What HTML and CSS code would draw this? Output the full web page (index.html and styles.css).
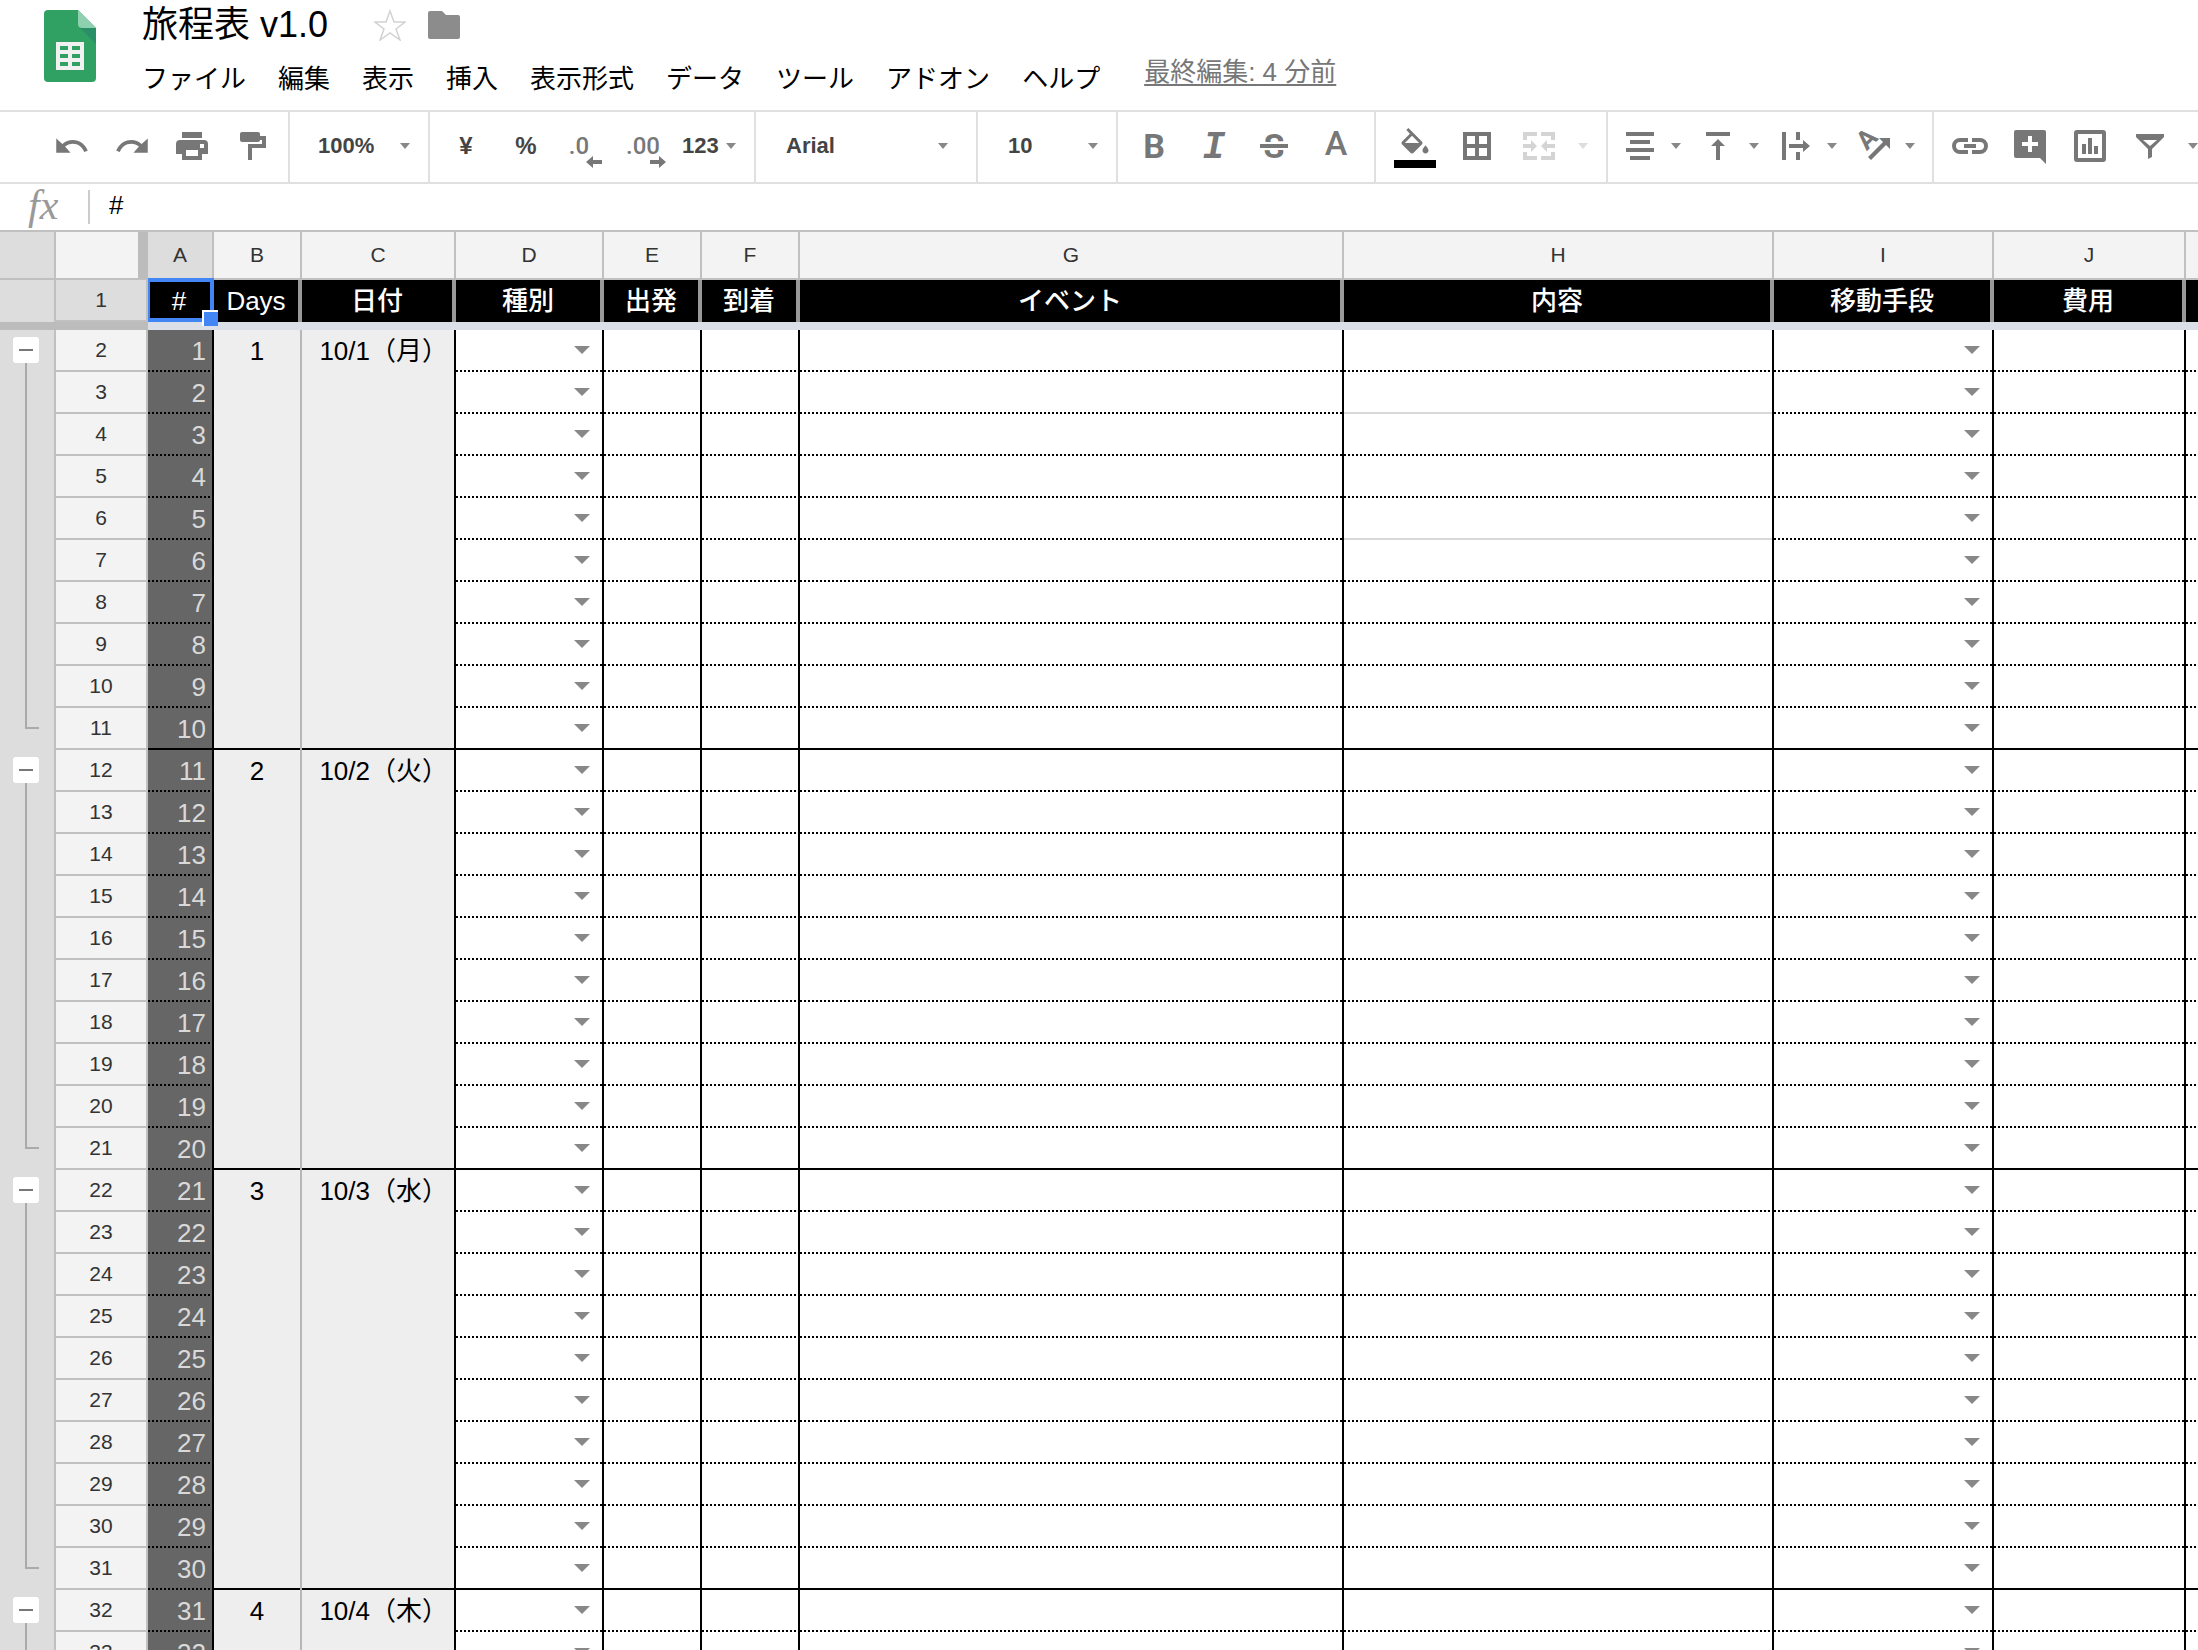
FILE: index.html
```html
<!DOCTYPE html>
<html lang="ja">
<head>
<meta charset="utf-8">
<title>旅程表 v1.0</title>
<link rel="stylesheet" href="styles.css">
</head>
<body>
<div class="app">
  <header class="header">
    <svg class="logo" viewBox="0 0 52 72" aria-hidden="true">
      <path d="M4 0h30l18 18v50a4 4 0 0 1-4 4H4a4 4 0 0 1-4-4V4a4 4 0 0 1 4-4z" fill="#31a163"/>
      <path d="M35 17l17 17V18z" fill="#2a8f67"/>
      <path d="M34 0l18 18H38a4 4 0 0 1-4-4z" fill="#8fd0b1"/>
      <path d="M12 32h28v28H12z" fill="#f1f1f1"/>
      <path d="M16 36h8v4h-8zM28 36h8v4h-8zM16 44h8v4h-8zM28 44h8v4h-8zM16 52h8v4h-8zM28 52h8v4h-8z" fill="#31a163"/>
    </svg>
    <div class="header-main">
      <div class="title-row">
        <h1 class="title">旅程表 v1.0</h1>
        <button class="plain star" aria-label="スター">
          <svg viewBox="0 0 32 32"><path d="M16 2l4 11h11l-9 7 4 11-10-7-10 7 4-11-9-7h11z" fill="none" stroke="#d2d2d2" stroke-width="1.5"/></svg>
        </button>
        <button class="plain folder" aria-label="フォルダ">
          <svg viewBox="0 0 32 28"><path d="M2 0h12l4 4h12a2 2 0 0 1 2 2v20a2 2 0 0 1-2 2H2a2 2 0 0 1-2-2V2a2 2 0 0 1 2-2z" fill="#8c8c8c"/></svg>
        </button>
      </div>
      <nav class="menu">
        <button class="plain">ファイル</button>
        <button class="plain">編集</button>
        <button class="plain">表示</button>
        <button class="plain">挿入</button>
        <button class="plain">表示形式</button>
        <button class="plain">データ</button>
        <button class="plain">ツール</button>
        <button class="plain">アドオン</button>
        <button class="plain">ヘルプ</button>
        <a class="last-edit" href="#history">最終編集: 4 分前</a>
      </nav>
    </div>
  </header>

  <div class="toolbar" role="toolbar">
    <div class="group group-file">
      <button class="tool" aria-label="元に戻す"><svg viewBox="0 0 24 24"><path d="M12.500 8c-2.650 0-5.050.990-6.900 2.600L1.500 7v9.500h9.500l-3.620-4.120c1.390-1.160 3.160-1.880 5.120-1.880 3.540 0 6.550 2.310 7.600 5.500l2.370-.780C21.080 11.030 17.150 8 12.500 8z"/></svg></button>
      <button class="tool" aria-label="やり直す"><svg viewBox="0 0 24 24"><path d="M11.500 8c2.650 0 5.050.990 6.900 2.600L22.500 7v9.500H13l3.620-4.120C15.230 11.220 13.460 10.500 11.500 10.500c-3.540 0-6.550 2.310-7.600 5.500l-2.370-.780C2.920 11.030 6.850 8 11.500 8z"/></svg></button>
      <button class="tool" aria-label="印刷"><svg viewBox="0 0 36 36"><path d="M8 4h20v6H8z"/><path fill-rule="evenodd" d="M6 12h24a4 4 0 0 1 4 4v10h-6v6H8v-6H2V16a4 4 0 0 1 4-4zm6 10v6h12v-6zm14-6v4h4v-4z"/></svg></button>
      <button class="tool" aria-label="書式を貼り付け"><svg viewBox="0 0 36 36"><rect x="6" y="4" width="20" height="10" rx="2"/><path d="M26 8h6v12H18v12h-4V16h14v-4h-2z"/></svg></button>
    </div>
    <div class="group group-select group-zoom">
      <button class="drop">100%<i class="caret"></i></button>
    </div>
    <div class="group group-number">
      <button class="tool symbol">¥</button>
      <button class="tool symbol">%</button>
      <button class="tool decimal" aria-label="小数点以下の桁数を減らす">.0<svg class="less" viewBox="0 0 16 12"><path d="M0 6l7-6v4h9v4H7v4z"/></svg></button>
      <button class="tool decimal decimal-more" aria-label="小数点以下の桁数を増やす">.00<svg class="more" viewBox="0 0 16 12"><path d="M16 6L9 0v4H0v4h9v4z"/></svg></button>
      <button class="drop drop-format">123<i class="caret"></i></button>
    </div>
    <div class="group group-select group-font">
      <button class="drop">Arial<i class="caret"></i></button>
    </div>
    <div class="group group-select group-size">
      <button class="drop">10<i class="caret"></i></button>
    </div>
    <div class="group group-text">
      <button class="tool glyph bold">B</button>
      <button class="tool glyph italic">I</button>
      <button class="tool" aria-label="取り消し線"><svg viewBox="0 0 36 36"><text x="18" y="30" class="strike-letter">S</text><path d="M4 14h28v8H4z" fill="#fff"/><path d="M4 16h28v4H4z"/></svg></button>
      <button class="tool glyph color">A</button>
    </div>
    <div class="group group-cell">
      <button class="tool" aria-label="塗りつぶしの色"><svg viewBox="0 0 36 36"><path transform="scale(1.5)" d="M16.560 8.940L7.620 0 6.210 1.410l2.380 2.380-5.150 5.150c-.590.590-.590 1.540 0 2.120l5.500 5.500c.290.290.680.440 1.060.440s.770-.150 1.060-.440l5.500-5.500c.590-.580.590-1.530 0-2.120zM5.210 10L10 5.210 14.790 10H5.210zM19 11.500s-2 2.170-2 3.500c0 1.100.900 2 2 2s2-.900 2-2c0-1.330-2-3.500-2-3.500z"/><path d="M-3 32h42v8H-3z" fill="#000"/></svg></button>
      <button class="tool" aria-label="枠線"><svg viewBox="0 0 36 36"><path fill-rule="evenodd" d="M4 4h28v28H4zM8 8v8h8V8zm12 0v8h8V8zM8 20v8h8v-8zm12 0v8h8v-8z"/></svg></button>
      <button class="tool" aria-label="セルを結合" disabled><svg viewBox="0 0 36 36"><path d="M2 4h14v4H6v4H2zM20 4h14v8h-4V8H20zM2 24h4v4h10v4H2zM30 24h4v8H20v-4h10zM2 16h8v-4l6 6-6 6v-4H2zM34 16h-8v-4l-6 6 6 6v-4h8z"/></svg></button>
      <button class="more-caret" aria-label="結合の種類" disabled><i class="caret"></i></button>
    </div>
    <div class="group group-align">
      <button class="tool with-caret" aria-label="水平方向の配置"><svg viewBox="0 0 36 36"><path d="M4 4h28v4H4zM8 12h20v4H8zM4 20h28v4H4zM8 28h20v4H8z"/></svg><i class="caret"></i></button>
      <button class="tool with-caret" aria-label="垂直方向の配置"><svg viewBox="0 0 36 36"><path d="M6 4h24v4H6zM18 11l7 7h-5v14h-4V18h-5z"/></svg><i class="caret"></i></button>
      <button class="tool with-caret" aria-label="テキストを折り返す"><svg viewBox="0 0 36 36"><path d="M4 4h4v28H4zM18 4h4v8h-4zM18 24h4v8h-4zM11 16h14v-4l7 6-7 6v-4H11z"/></svg><i class="caret"></i></button>
      <button class="tool with-caret" aria-label="テキストの回転"><svg viewBox="0 0 36 36"><text x="0" y="0" transform="translate(17 17) rotate(-45)" class="rotate-letter">A</text><path d="M12 29L27 14l-4-4h11v11l-4-4-15 15z"/></svg><i class="caret"></i></button>
    </div>
    <div class="group group-insert">
      <button class="tool" aria-label="リンクを挿入"><svg viewBox="0 0 36 36"><path d="M16 12H8a6 6 0 0 0 0 12h8M20 12h8a6 6 0 0 1 0 12h-8M12 18h12" fill="none" stroke="#777" stroke-width="4"/></svg></button>
      <button class="tool" aria-label="コメントを挿入"><svg viewBox="0 0 36 36"><path fill-rule="evenodd" d="M4 2h28a2 2 0 0 1 2 2v32l-6-6H4a2 2 0 0 1-2-2V4a2 2 0 0 1 2-2zm12 6v6h-6v4h6v6h4v-6h6v-4h-6V8z"/></svg></button>
      <button class="tool" aria-label="グラフを挿入"><svg viewBox="0 0 36 36"><rect x="4" y="4" width="28" height="28" rx="1" fill="none" stroke="#777" stroke-width="4"/><path d="M10 16h4v10h-4zM16 10h4v16h-4zM22 18h4v8h-4z"/></svg></button>
      <button class="tool" aria-label="フィルタを作成"><svg viewBox="0 0 36 36"><path fill-rule="evenodd" d="M4 6h28v3L20 21v8l-4 2V21L4 9zm7 6l7 6 7-6z"/></svg></button>
      <button class="more-caret" aria-label="フィルタ表示"><i class="caret"></i></button>
    </div>
  </div>

  <div class="formula">
    <label class="fx" for="formula-input">fx</label>
    <input class="formula-input" id="formula-input" type="text" value="#">
  </div>

  <main class="sheet">
    <table class="grid">
      <colgroup>
        <col class="w-gutter"><col class="w-rowhead"><col class="w-a"><col class="w-b"><col class="w-c"><col class="w-d"><col class="w-e"><col class="w-e"><col class="w-g"><col class="w-h"><col class="w-i"><col class="w-j"><col>
      </colgroup>
      <thead>
        <tr class="letters">
          <td class="gutter"></td><td class="corner"></td>
          <th class="selected">A</th><th>B</th><th>C</th><th>D</th><th>E</th><th>F</th><th>G</th><th>H</th><th>I</th><th>J</th><th></th>
        </tr>
        <tr class="titles">
          <td class="gutter"></td><th class="rowhead selected">1</th>
          <td class="active">#<span class="cursor"></span></td><td>Days</td><td>日付</td><td>種別</td><td>出発</td><td>到着</td><td>イベント</td><td>内容</td><td>移動手段</td><td>費用</td><td></td>
        </tr>
        <tr class="freeze"><td colspan="2" class="freeze-handle"></td><td colspan="11"></td></tr>
      </thead>
      <tbody id="rows"></tbody>
    </table>
  </main>
</div>
<script src="app.js"></script>
</body>
</html>
```

FILE: styles.css
```css
* { box-sizing: border-box; }

body {
  margin: 0;
  background: #fff;
  color: #000;
  font-family: "Liberation Sans", "Noto Sans CJK JP", sans-serif;
  font-size: 26px;
}

button, input, select {
  margin: 0;
  padding: 0;
  border: 0;
  background: none;
  color: inherit;
  font: inherit;
}

.app {
  display: flex;
  flex-direction: column;
  height: 100vh;
  overflow: hidden;
}

/* Document header */
.header {
  display: flex;
  flex: none;
  gap: 46px;
  height: 110px;
  padding-left: 44px;
}
.logo { flex: none; width: 52px; height: 72px; margin-top: 10px; }
.title-row { display: flex; align-items: center; height: 50px; }
.title { margin: 0; font-size: 36px; font-weight: 400; line-height: 50px; white-space: nowrap; }
.plain { display: block; flex: none; white-space: nowrap; }
.plain svg { display: block; }
.star { margin-left: 46px; }
.star svg { width: 32px; height: 32px; }
.folder { margin-left: 22px; }
.folder svg { width: 32px; height: 28px; }
.menu { display: flex; align-items: center; gap: 32px; height: 52px; }
.last-edit {
  margin: 0 0 8px 12px;
  color: #777;
  line-height: 32px;
  white-space: nowrap;
  text-decoration: underline;
  text-decoration-thickness: 2px;
  text-underline-offset: 3px;
}

/* Toolbar */
.toolbar {
  display: flex;
  flex: none;
  height: 74px;
  border-top: 2px solid #e0e0e0;
  border-bottom: 2px solid #e0e0e0;
  overflow: hidden;
  color: #444;
  font-size: 22px;
  font-weight: 700;
}
.group {
  display: flex;
  flex: none;
  align-items: center;
  padding-bottom: 2px;
  border-right: 2px solid #e0e0e0;
}
.tool {
  display: flex;
  flex: none;
  align-items: center;
  justify-content: center;
  width: 60px;
  height: 40px;
}
.tool svg { flex: none; width: 36px; height: 36px; fill: #777; overflow: visible; }
.tool:disabled svg { fill: #d4d4d4; }
.caret {
  flex: none;
  width: 10px;
  height: 6px;
  background: #888;
  clip-path: polygon(0 0, 100% 0, 50% 100%);
}
:disabled .caret { background: #ddd; }
.drop { display: flex; flex: 1; align-items: center; justify-content: space-between; }
.more-caret { display: flex; padding: 16px 0 16px 8px; }
.symbol { font-size: 24px; }
.group-file { padding-left: 42px; padding-right: 6px; }
.group-select { padding-left: 28px; padding-right: 18px; }
.group-zoom { width: 140px; }
.group-font { width: 222px; padding-left: 30px; padding-right: 28px; }
.group-size { width: 140px; padding-left: 30px; }
.group-number { width: 326px; padding-left: 6px; padding-right: 18px; }
.drop-format { padding-left: 6px; }
.group-text { padding-left: 6px; padding-right: 10px; }
.group-cell { padding-left: 8px; padding-right: 18px; }
.group-cell .tool { width: 62px; }
.group-align { padding-left: 2px; padding-right: 10px; }
.with-caret { justify-content: flex-start; gap: 13px; width: 78px; padding-left: 12px; }
.group-insert { padding-left: 6px; border-right: 0; }
.decimal { position: relative; color: #777; font: 500 24px Roboto, sans-serif; padding-right: 14px; }
.decimal-more { padding-right: 6px; }
.decimal svg { position: absolute; top: 30px; right: 14px; width: 16px; height: 12px; }
.decimal .more { right: 10px; }
.glyph { color: #777; font-family: Roboto, sans-serif; font-size: 34px; line-height: 40px; }
.italic { padding-top: 4px; font-family: "Liberation Mono", monospace; font-style: italic; font-size: 38px; }
.color { padding-bottom: 6px; padding-left: 4px; font-weight: 500; }
.strike-letter { font: 700 34px Roboto, sans-serif; text-anchor: middle; }
.rotate-letter { font: 700 26px Roboto, sans-serif; text-anchor: middle; }

/* Formula bar */
.formula { display: flex; flex: none; align-items: center; height: 46px; }
.fx {
  width: 90px;
  height: 34px;
  padding-left: 28px;
  border-right: 2px solid #ccc;
  color: #999;
  font: italic 42px "Liberation Serif", serif;
  line-height: 30px;
}
.formula-input { flex: 1; height: 40px; padding-left: 19px; padding-bottom: 4px; outline: 0; }

/* Sheet */
.sheet { flex: 1; min-height: 0; overflow: auto; scrollbar-width: none; border-top: 2px solid #c0c0c0; }
.grid { width: 100%; table-layout: fixed; border-collapse: separate; border-spacing: 0; }
.w-gutter { width: 56px; }
.w-rowhead { width: 92px; }
.w-a { width: 66px; }
.w-b { width: 88px; }
.w-c { width: 154px; }
.w-d { width: 148px; }
.w-e { width: 98px; }
.w-g { width: 544px; }
.w-h { width: 430px; }
.w-i { width: 220px; }
.w-j { width: 192px; }
th, td { padding: 0; overflow: hidden; white-space: nowrap; line-height: 40px; }

.gutter { background: #ddd; border-right: 2px solid #c0c0c0; vertical-align: top; }
.letters { height: 48px; }
.letters th, .rowhead {
  background: #f3f3f3;
  border-right: 2px solid #c0c0c0;
  border-bottom: 2px solid #c0c0c0;
  color: #333;
  font-size: 21px;
  font-weight: 400;
}
.letters .gutter, .corner { border-bottom: 2px solid #c0c0c0; }
.corner { background: #f3f3f3; border-right: 10px solid #bcbcbc; }
.letters .selected, .rowhead.selected { background: #ddd; }

.titles { height: 42px; }
.titles td:not(.gutter) {
  background: #000;
  border-right: 4px solid #999;
  color: #fff;
  font-weight: 500;
  text-align: center;
}
.titles .active { position: relative; overflow: visible; }
.cursor {
  position: absolute;
  top: -2px;
  right: -4px;
  bottom: 0;
  left: 0;
  border: 4px solid #4285f4;
  border-left-width: 2px;
}
.cursor::after {
  content: "";
  position: absolute;
  right: -8px;
  bottom: -8px;
  width: 14px;
  height: 14px;
  border: solid #fff;
  border-width: 2px 0 0 2px;
  background: #4285f4;
}
.freeze { height: 8px; }
.freeze td { height: 8px; background: #dadfe8; line-height: 0; }
.freeze .freeze-handle { background: #bcbcbc; }

tbody tr { height: 42px; }
tbody td { border-right: 2px solid #000; line-height: 42px; }
.letters th:last-child, .titles td:last-child:not(.gutter), tbody td:last-child { border-right: 0; }
.cell {
  background-image: linear-gradient(90deg, #000 50%, transparent 50%);
  background-repeat: repeat-x;
  background-position: left bottom;
  background-size: 4px 2px;
  vertical-align: top;
}
.cell.plain-line { background-image: linear-gradient(#d9d9d9, #d9d9d9); }
.cell.day-end, .merged { background-image: linear-gradient(#000, #000); background-repeat: repeat-x; background-position: left bottom; background-size: 4px 2px; }
.number { padding-right: 6px; background-color: #666; color: #d9d9d9; text-align: right; }
.merged { background-color: #eee; vertical-align: top; }
.day { border-right-color: #b7b7b7; text-align: center; }
.date { padding-right: 6px; text-align: right; }
.choice {
  display: block;
  width: 100%;
  height: 40px;
  appearance: none;
  background: url("data:image/svg+xml,%3Csvg xmlns='http://www.w3.org/2000/svg' width='16' height='8'%3E%3Cpath d='M0 0h16L8 8z' fill='%23888'/%3E%3C/svg%3E") no-repeat right 12px center;
}

/* Row group brackets */
tbody .gutter { border-right-color: #c0c0c0; }
.fold {
  display: flex;
  align-items: center;
  justify-content: center;
  width: 26px;
  height: 26px;
  margin: 7px 0 0 13px;
  border-radius: 3px;
  background: #fff;
}
.fold::before { content: ""; width: 14px; height: 2px; background: #777; }
.bracket {
  width: 14px;
  height: 366px;
  margin-left: 25px;
  border: solid #aaa;
  border-width: 0 0 2px 2px;
}
```

FILE: app.js
```js
const days = ["10/1（月）", "10/2（火）", "10/3（水）", "10/4（木）"];
const rowsPerDay = 10;
const columns = ["D", "E", "F", "G", "H", "I", "J", "K"];
const choiceColumns = ["D", "I"];
const plainRows = [3, 6];
let html = "";

days.forEach((date, day) => {
  for (let i = 0; i < rowsPerDay; i++) {
    const number = day * rowsPerDay + i + 1;
    const row = number + 1;
    const last = i === rowsPerDay - 1;
    html += "<tr>";
    if (i === 0) {
      html += `<td class="gutter" rowspan="${rowsPerDay}"><button class="fold" aria-label="グループを閉じる"></button><div class="bracket"></div></td>`;
    }
    html += `<th class="rowhead">${row}</th>`;
    html += `<td class="cell number${number === 10 ? " day-end" : ""}">${number}</td>`;
    if (i === 0) {
      html += `<td class="merged day" rowspan="${rowsPerDay}">${day + 1}</td>`;
      html += `<td class="merged date" rowspan="${rowsPerDay}">${date}</td>`;
    }
    columns.forEach((column) => {
      let line = "";
      if (last) line = " day-end";
      else if (column === "H" && plainRows.includes(row)) line = " plain-line";
      const choice = choiceColumns.includes(column)
        ? `<select class="choice" aria-label="${column}${row}"><option></option></select>`
        : "";
      html += `<td class="cell${line}">${choice}</td>`;
    });
    html += "</tr>";
  }
});

document.getElementById("rows").innerHTML = html;
```
